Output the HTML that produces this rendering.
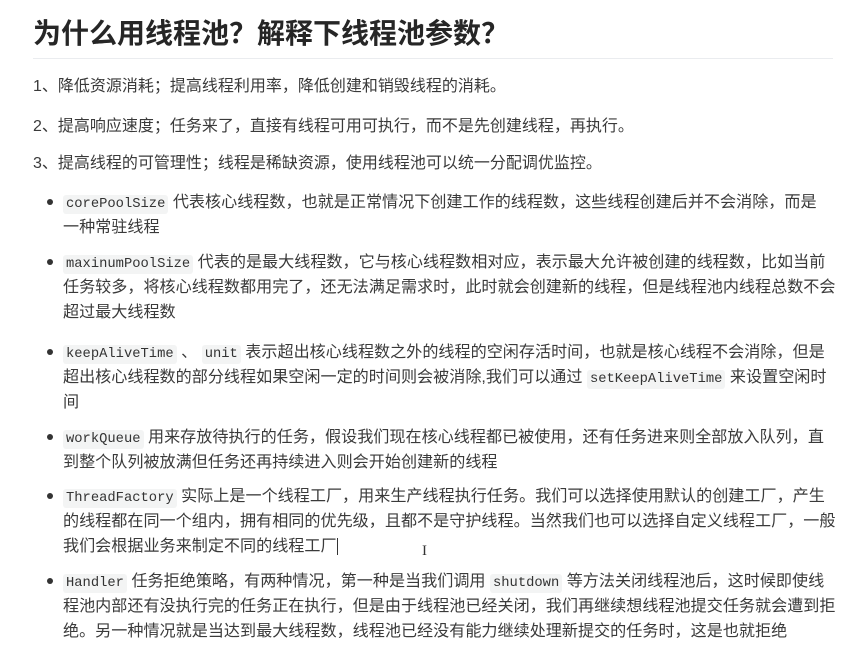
<!DOCTYPE html>
<html><head><meta charset="utf-8"><style>
body{margin:0;width:861px;height:652px;background:#fff;overflow:hidden;position:relative;font-family:"Liberation Sans","Noto Sans CJK SC",sans-serif;color:#3a3a3a}
.h{position:absolute;left:33px;top:14px;font-size:28px;font-weight:bold;color:#262626;line-height:40px;white-space:nowrap}
.hr{position:absolute;left:33px;top:58px;width:800px;height:1px;background:#eaecef}
.l{position:absolute;left:63px;height:25px;line-height:25px;font-size:16.1px;white-space:nowrap}
.p{left:33px;font-size:16px}
code{font-family:"Liberation Mono","DejaVu Sans Mono",monospace;font-size:13.8px;background:#f3f4f4;padding:2px 3px;border-radius:3px;color:#333}
.b{position:absolute;left:47px;width:6px;height:6px;border-radius:50%;background:#333}
</style></head><body>
<div class="h">为什么用线程池？解释下线程池参数？</div>
<div class="hr"></div>
<div class="l p" style="top:74px">1、降低资源消耗；提高线程利用率，降低创建和销毁线程的消耗。</div>
<div class="l p" style="top:114px">2、提高响应速度；任务来了，直接有线程可用可执行，而不是先创建线程，再执行。</div>
<div class="l p" style="top:151px">3、提高线程的可管理性；线程是稀缺资源，使用线程池可以统一分配调优监控。</div>

<div class="b" style="top:199px"></div>
<div class="l" style="top:190px"><code>corePoolSize</code> 代表核心线程数，也就是正常情况下创建工作的线程数，这些线程创建后并不会消除，而是</div>
<div class="l" style="top:215px">一种常驻线程</div>

<div class="b" style="top:259px"></div>
<div class="l" style="top:250px"><code>maxinumPoolSize</code> 代表的是最大线程数，它与核心线程数相对应，表示最大允许被创建的线程数，比如当前</div>
<div class="l" style="top:275px">任务较多，将核心线程数都用完了，还无法满足需求时，此时就会创建新的线程，但是线程池内线程总数不会</div>
<div class="l" style="top:300px">超过最大线程数</div>

<div class="b" style="top:349px"></div>
<div class="l" style="top:340px"><code>keepAliveTime</code> 、 <code>unit</code> 表示超出核心线程数之外的线程的空闲存活时间，也就是核心线程不会消除，但是</div>
<div class="l" style="top:365px">超出核心线程数的部分线程如果空闲一定的时间则会被消除,我们可以通过 <code>setKeepAliveTime</code> 来设置空闲时</div>
<div class="l" style="top:390px">间</div>

<div class="b" style="top:434px"></div>
<div class="l" style="top:425px"><code>workQueue</code> 用来存放待执行的任务，假设我们现在核心线程都已被使用，还有任务进来则全部放入队列，直</div>
<div class="l" style="top:450px">到整个队列被放满但任务还再持续进入则会开始创建新的线程</div>

<div class="b" style="top:493px"></div>
<div class="l" style="top:484px"><code>ThreadFactory</code> 实际上是一个线程工厂，用来生产线程执行任务。我们可以选择使用默认的创建工厂，产生</div>
<div class="l" style="top:509px">的线程都在同一个组内，拥有相同的优先级，且都不是守护线程。当然我们也可以选择自定义线程工厂，一般</div>
<div class="l" style="top:534px">我们会根据业务来制定不同的线程工厂<span style="display:inline-block;width:1px;height:17px;background:#333;vertical-align:middle"></span></div>
<div style="position:absolute;left:422px;top:543px;font-size:15px;color:#333;font-family:'Liberation Serif',serif">I</div>

<div class="b" style="top:578px"></div>
<div class="l" style="top:569px"><code>Handler</code> 任务拒绝策略，有两种情况，第一种是当我们调用 <code>shutdown</code> 等方法关闭线程池后，这时候即使线</div>
<div class="l" style="top:594px">程池内部还有没执行完的任务正在执行，但是由于线程池已经关闭，我们再继续想线程池提交任务就会遭到拒</div>
<div class="l" style="top:619px">绝。另一种情况就是当达到最大线程数，线程池已经没有能力继续处理新提交的任务时，这是也就拒绝</div>
</body></html>
